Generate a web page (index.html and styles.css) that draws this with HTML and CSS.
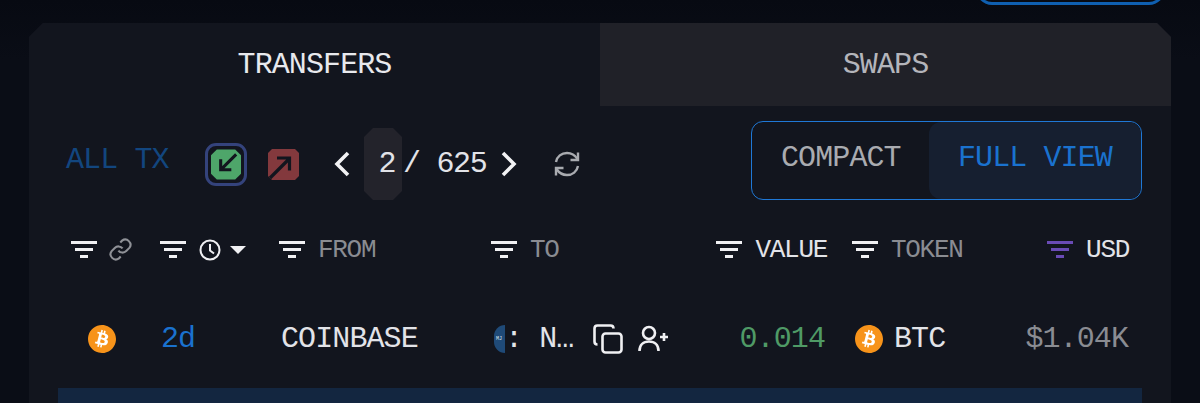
FILE: index.html
```html
<!DOCTYPE html>
<html lang="en">
<head>
    <meta charset="UTF-8">
    <title>Transfers</title>
    <link rel="stylesheet" href="styles.css">
</head>
<body>
    <svg class="defs" width="0" height="0">
        <symbol id="filter" viewBox="0 0 26 18">
            <path d="M0 1.500h26M4 8.500h18M9 15.500h8" fill="none" stroke="currentColor" stroke-width="3"/>
        </symbol>
        <symbol id="btc" viewBox="0 0 24 24">
            <circle cx="12" cy="12" r="9" fill="#fff"/>
            <path fill="#f7931a" d="M23.638 14.904c-1.602 6.43-8.113 10.34-14.542 8.736C2.67 22.05-1.244 15.525.362 9.105 1.962 2.67 8.475-1.243 14.9.358c6.43 1.605 10.342 8.115 8.738 14.548v-.002zm-6.35-4.613c.24-1.59-.974-2.45-2.64-3.03l.54-2.153-1.315-.33-.525 2.107c-.345-.087-.705-.167-1.064-.25l.526-2.127-1.32-.33-.54 2.165c-.285-.067-.565-.132-.84-.2l-1.815-.45-.35 1.407s.975.225.955.236c.535.136.63.486.615.766l-1.477 5.92c-.075.166-.24.406-.614.314.015.02-.96-.24-.96-.24l-.66 1.51 1.71.426.93.242-.54 2.19 1.32.327.54-2.17c.36.1.705.19 1.05.273l-.51 2.154 1.32.33.545-2.19c2.24.427 3.93.257 4.64-1.774.57-1.637-.03-2.58-1.217-3.196.854-.193 1.5-.76 1.68-1.93h.01zm-3.01 4.22c-.404 1.64-3.157.75-4.05.53l.72-2.9c.896.23 3.757.67 3.33 2.37zm.41-4.24c-.37 1.49-2.662.735-3.405.55l.654-2.64c.744.185 3.137.53 2.75 2.084v.006z"/>
        </symbol>
    </svg>

    <div class="top-btn"></div>

    <div class="card">
        <div class="tabs">
            <div class="tab active">TRANSFERS</div>
            <div class="tab">SWAPS</div>
        </div>

        <div class="toolbar">
            <div class="tools">
                <span class="all-tx">ALL TX</span>
                <span class="dir-ring">
                    <svg class="dir dir-in" viewBox="0 0 31 31">
                        <path d="M6 0h19l6 6v19l-6 6H6l-6-6V6z" fill="#4ea66a"/>
                        <path d="M26 5L11 20M10 10v11h11" fill="none" stroke="#12151e" stroke-width="3.200"/>
                    </svg>
                </span>
                <svg class="dir dir-out" viewBox="0 0 31 31">
                    <path d="M4 0h23l4 4v23l-4 4H4l-4-4V4z" fill="#83393d"/>
                    <path d="M2 29L21 10M9 9h12.500v12.500" fill="none" stroke="#12151e" stroke-width="3.200"/>
                </svg>
                <svg class="chev chev-left" viewBox="0 0 18 26">
                    <path d="M15 2L4 13l11 11" fill="none" stroke="#f2f2f4" stroke-width="3.600"/>
                </svg>
                <span class="page-pill">2</span>
                <span class="page-total">/ 625</span>
                <svg class="chev chev-right" viewBox="0 0 18 26">
                    <path d="M3 2l11 11L3 24" fill="none" stroke="#f2f2f4" stroke-width="3.600"/>
                </svg>
                <svg class="refresh" viewBox="0 0 28 28" fill="none" stroke="#a9abb0" stroke-width="2.400">
                    <path d="M3 12C4 6.500 8.500 3 14 3c4.500 0 8 2.200 10.500 6"/>
                    <path d="M25 2.500V10h-7.500"/>
                    <path d="M25 16c-1 5.500-5.500 9-11 9-4.500 0-8-2.200-10.500-6"/>
                    <path d="M3 25.500V18h7.500"/>
                </svg>
            </div>
            <div class="view-toggle">
                <span class="view">COMPACT</span>
                <span class="view view-on">FULL VIEW</span>
            </div>
        </div>

        <div class="grid head">
            <div class="cell c1">
                <svg class="filter"><use href="#filter"/></svg>
                <svg class="link-ic" viewBox="0 0 24 24" fill="none" stroke="#8f9197" stroke-width="2">
                    <path d="M10 13a5 5 0 0 0 7.500.5l3-3a5 5 0 0 0-7-7l-1.700 1.700"/>
                    <path d="M14 11a5 5 0 0 0-7.500-.5l-3 3a5 5 0 0 0 7 7l1.700-1.700"/>
                </svg>
            </div>
            <div class="cell c2">
                <svg class="filter"><use href="#filter"/></svg>
                <svg class="clock" viewBox="0 0 22 22" fill="none" stroke="#f0f0f3" stroke-width="2">
                    <circle cx="11" cy="11" r="9.500"/>
                    <path d="M11 5v6.500l4 3"/>
                </svg>
                <span class="caret"></span>
            </div>
            <div class="cell c3"><svg class="filter"><use href="#filter"/></svg><span class="lbl">FROM</span></div>
            <div class="cell c4"><svg class="filter"><use href="#filter"/></svg><span class="lbl">TO</span></div>
            <div class="cell c5"><svg class="filter"><use href="#filter"/></svg><span class="lbl lbl-on">VALUE</span></div>
            <div class="cell c6"><svg class="filter"><use href="#filter"/></svg><span class="lbl">TOKEN</span></div>
            <div class="cell c7"><svg class="filter filter-on"><use href="#filter"/></svg><span class="lbl lbl-on">USD</span></div>
        </div>

        <div class="grid row">
            <div class="cell c1"><svg class="coin"><use href="#btc"/></svg></div>
            <div class="cell c2 time">2d</div>
            <div class="cell c3 name">COINBASE</div>
            <div class="cell c4 to">
                <span class="avatar">MJ</span>
                <span class="name">: N…</span>
                <svg class="copy" viewBox="0 0 30 30" fill="none" stroke="#f0f0f3" stroke-width="2.600">
                    <rect x="9.500" y="9.500" width="19" height="19" rx="3"/>
                    <path d="M4.500 20.500C2.800 20.500 1.500 19.200 1.500 17.500V4.500C1.500 2.800 2.800 1.500 4.500 1.500h13c1.700 0 3 1.300 3 3"/>
                </svg>
                <svg class="user" viewBox="0 0 30 28" fill="none" stroke="#f0f0f3" stroke-width="2.600">
                    <circle cx="11" cy="8" r="6"/>
                    <path d="M1.500 26c0-6 4-9.500 9.500-9.500S20.500 20 20.500 26"/>
                    <path d="M22 12h8M26 8v8"/>
                </svg>
            </div>
            <div class="cell c5 amount">0.014</div>
            <div class="cell c6 token"><svg class="coin"><use href="#btc"/></svg><span class="name">BTC</span></div>
            <div class="cell c7 usd">$1.04K</div>
        </div>

        <div class="next-row"></div>
    </div>
</body>
</html>
```

FILE: styles.css
```css
* {
    box-sizing: border-box;
}
html, body {
    height: 403px;
    overflow: hidden;
}
body {
    margin: 0;
    background: linear-gradient(#070a12, #0a0d16 60px);
    font-family: "Liberation Mono", monospace;
    font-size: 30px;
    letter-spacing: -0.9px;
    color: #e2e3e8;
    position: relative;
}
.defs {
    position: absolute;
}
.top-btn {
    position: absolute;
    top: -30px;
    left: 976px;
    width: 189px;
    height: 35px;
    border: 3px solid #0f5fb0;
    border-radius: 16px;
}
.card {
    margin: 0 29px;
    padding-top: 23px;
    height: 403px;
}
.tabs {
    display: flex;
    height: 83px;
    background: #12151e;
    clip-path: polygon(14px 0, calc(100% - 14px) 0, 100% 14px, 100% 100%, 0 100%, 0 14px);
}
.tab {
    flex: 1;
    display: flex;
    align-items: center;
    justify-content: center;
    padding-top: 1px;
    color: #b4b5bb;
    background: #202128;
}
.tab.active {
    color: #e8e9ed;
    background: #12151e;
    flex: 0 0 571px;
}
.toolbar {
    display: flex;
    justify-content: space-between;
    align-items: flex-start;
    height: 104px;
    padding: 15px 29px 0 37px;
    background: #12151e;
}
.tools {
    display: flex;
    align-items: center;
    height: 72px;
    margin-top: 7px;
}
.all-tx {
    width: 139px;
    padding-bottom: 8px;
    color: #12467f;
}
.dir-ring {
    display: flex;
    align-items: center;
    justify-content: center;
    width: 42px;
    height: 43px;
    margin-right: 21px;
    border: 3px solid #34437c;
    border-radius: 11px;
}
.dir {
    display: block;
    width: 31px;
    height: 31px;
}
.dir-in {
    width: 30px;
    height: 31px;
}
.chev {
    width: 18px;
    height: 26px;
}
.chev-left {
    margin: 0 13px 0 34px;
}
.page-pill {
    display: flex;
    align-items: center;
    justify-content: center;
    width: 38px;
    height: 72px;
    padding-left: 8px;
    background: #23232b;
    clip-path: polygon(9px 0, 29px 0, 100% 9px, 100% 63px, 29px 100%, 9px 100%, 0 63px, 0 9px);
}
.page-total {
    margin-left: 1px;
    width: 97px;
    letter-spacing: -1.300px;
}
.chev-right {
    margin-right: 35px;
}
.refresh {
    width: 28px;
    height: 28px;
}
.view-toggle {
    display: flex;
    width: 391px;
    height: 79px;
    border: 1px solid #1f78d6;
    border-radius: 12px;
    overflow: hidden;
}
.view {
    display: flex;
    align-items: center;
    padding: 0 0 5px 29px;
    width: 177px;
    color: #a9abb0;
}
.view-on {
    flex: 1;
    color: #1a72cf;
    background: #161f30;
    border-radius: 12px;
}
.grid {
    display: grid;
    grid-template-columns: 88px 124px 210px 220px 140px 170px 132px;
    padding: 0 29px;
    background: #12151e;
}
.head {
    height: 86px;
    padding-bottom: 7px;
    font-size: 26px;
    letter-spacing: -1.300px;
}
.row {
    height: 92px;
    padding-bottom: 7px;
}
.cell {
    display: flex;
    align-items: center;
}
.c1 {
    justify-content: center;
}
.c2, .c3, .c4, .c6 {
    padding-left: 12px;
}
.head .c2 {
    padding-left: 14px;
}
.head .c3 {
    padding-left: 9px;
}
.head .c4 {
    padding-left: 11px;
}
.c5, .c7 {
    justify-content: flex-end;
    padding-right: 13px;
}
.row .c2 {
    padding-left: 15px;
}
.row .c3 {
    padding-left: 11px;
}
.row .c4 {
    padding-left: 14px;
}
.row .c5 {
    padding-right: 15px;
}
.row .c6 {
    padding-left: 15px;
}
.row .c7 {
    padding-right: 14px;
}
.filter {
    width: 26px;
    height: 18px;
    color: #f0f0f3;
    flex: none;
}
.filter-on {
    color: #6a4bb5;
}
.link-ic {
    width: 25px;
    height: 25px;
    margin-left: 11px;
}
.clock {
    width: 22px;
    height: 22px;
    margin-left: 13px;
}
.caret {
    width: 0;
    height: 0;
    margin-left: 9px;
    border-left: 8px solid transparent;
    border-right: 8px solid transparent;
    border-top: 8px solid #f0f0f3;
}
.lbl {
    margin-left: 13px;
    color: #8a8c92;
}
.lbl-on {
    color: #e2e3e8;
}
.coin {
    width: 28px;
    height: 28px;
    flex: none;
}
.time {
    color: #1a72cf;
}
.avatar {
    display: flex;
    align-items: center;
    width: 11px;
    height: 28px;
    overflow: hidden;
    padding-left: 2px;
    font-size: 5px;
    letter-spacing: 0;
    color: #dfe6ee;
    background: #1f4a78;
    border-radius: 11px 0 0 11px;
}
.copy {
    width: 30px;
    height: 30px;
    margin-left: 20px;
    flex: none;
}
.user {
    width: 30px;
    height: 28px;
    margin-left: 15px;
    flex: none;
}
.amount {
    color: #4f9a66;
}
.token .name {
    margin-left: 11px;
}
.usd {
    color: #8a8c92;
}
.next-row {
    height: 15px;
    background: #12151e;
    position: relative;
}
.next-row::before {
    content: "";
    position: absolute;
    inset: 0 29px;
    background: #132640;
}
```
